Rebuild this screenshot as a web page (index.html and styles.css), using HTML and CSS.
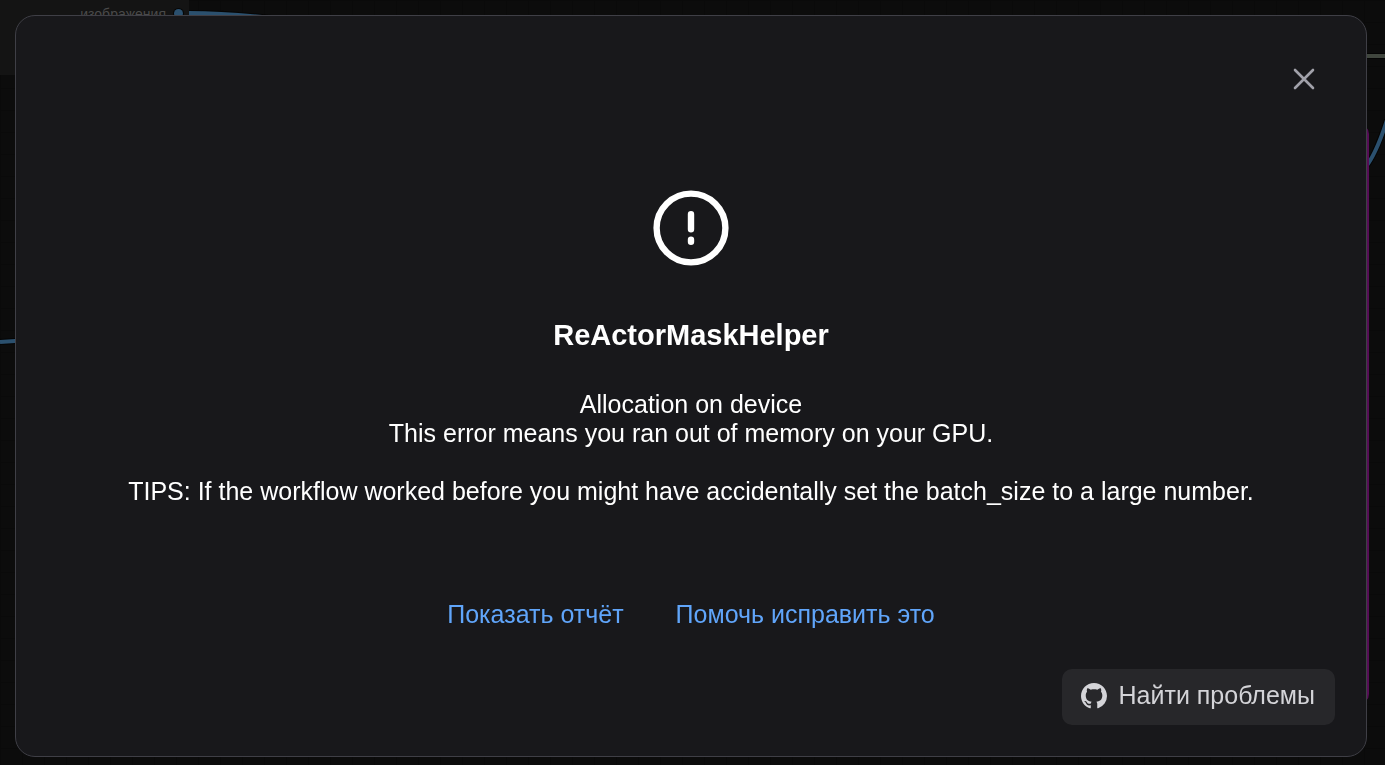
FILE: index.html
```html
<!DOCTYPE html>
<html lang="ru">
<head>
    <meta charset="UTF-8">
    <meta name="viewport" content="width=device-width, initial-scale=1.0">
    <title>ReActorMaskHelper</title>
    <link rel="stylesheet" href="styles.css">
</head>
<body>
    <div class="canvas">
        <svg class="wires wires-left" width="300" height="400" viewBox="0 0 300 400">
            <path class="wire-shadow" d="M189 13C215 13 235 14 270 18M0 342L30 340"/>
            <path class="wire" d="M189 13C215 13 235 14 270 18M0 342L30 340"/>
        </svg>
        <svg class="wires wires-right" width="40" height="200" viewBox="0 0 40 200">
            <path class="wire-shadow" d="M0 56H40M18 170C27 161 34 145 42 120"/>
            <path class="wire" d="M18 170C27 161 34 145 42 120"/>
            <path class="wire wire-mask" d="M0 56H40"/>
        </svg>
        <div class="group"></div>
        <div class="node">
            <span class="slot-name">изображения</span>
            <span class="slot-dot"></span>
        </div>
    </div>

    <div class="overlay">
        <div class="dialog" role="dialog" aria-modal="true" aria-labelledby="dialog-title">
            <div class="dialog-header">
                <button class="close-btn" type="button" aria-label="Закрыть">
                    <svg width="22" height="22" viewBox="0 0 22 22">
                        <path d="M2 2L20 20M20 2L2 20"/>
                    </svg>
                </button>
            </div>
            <div class="dialog-content">
                <svg class="error-icon" width="76" height="76" viewBox="0 0 76 76">
                    <circle cx="38" cy="38" r="34.4"/>
                    <path d="M38 24.3V39.3M38 49.7V51.7"/>
                </svg>
                <h3 class="title" id="dialog-title">ReActorMaskHelper</h3>
                <p class="message">Allocation on device
This error means you ran out of memory on your GPU.

TIPS: If the workflow worked before you might have accidentally set the batch_size to a large number.</p>
                <div class="links">
                    <button class="link-btn" type="button">Показать отчёт</button>
                    <button class="link-btn" type="button">Помочь исправить это</button>
                </div>
            </div>
            <div class="dialog-footer">
                <button class="issues-btn" type="button">
                    <svg width="26" height="26" viewBox="0 0 16 16">
                        <path d="M8 0C3.58 0 0 3.58 0 8c0 3.54 2.29 6.53 5.47 7.59.4.07.55-.17.55-.38 0-.19-.01-.82-.01-1.49-2.01.37-2.53-.49-2.69-.94-.09-.23-.48-.94-.82-1.13-.28-.15-.68-.52-.01-.53.63-.01 1.08.58 1.23.82.72 1.21 1.87.87 2.33.66.07-.52.28-.87.51-1.07-1.78-.2-3.64-.89-3.64-3.95 0-.87.31-1.59.82-2.15-.08-.2-.36-1.02.08-2.12 0 0 .67-.21 2.2.82.64-.18 1.32-.27 2-.27s1.36.09 2 .27c1.53-1.04 2.2-.82 2.2-.82.44 1.1.16 1.92.08 2.12.51.56.82 1.27.82 2.15 0 3.07-1.87 3.75-3.65 3.95.29.25.54.73.54 1.48 0 1.07-.01 1.93-.01 2.2 0 .21.15.46.55.38A8.01 8.01 0 0 0 16 8c0-4.42-3.58-8-8-8z"/>
                    </svg>
                    <span>Найти проблемы</span>
                </button>
            </div>
        </div>
    </div>
</body>
</html>
```

FILE: styles.css
```css
* {
    box-sizing: border-box;
}
body {
    margin: 0;
    background-color: #0c0c0c;
    color: white;
    font-family: "Liberation Sans", Arial, sans-serif;
    font-size: 25px;
    line-height: 29px;
}
button {
    border: none;
    padding: 0;
    background: none;
    font: inherit;
    cursor: pointer;
}

/* node graph behind the dialog */
.canvas {
    position: fixed;
    inset: 0;
    overflow: hidden;
    background-image:
        linear-gradient(#0a0a0a 1px, transparent 1px),
        linear-gradient(90deg, #0a0a0a 1px, transparent 1px);
    background-size: 22px 22px;
}
.node {
    position: absolute;
    top: 0;
    left: 0;
    display: flex;
    justify-content: flex-end;
    gap: 8px;
    width: 189px;
    height: 75px;
    padding: 6px 6px 0 0;
    background-color: #141414;
    color: #4a4a4a;
    font-size: 14px;
    line-height: 16px;
}
.slot-dot {
    width: 9px;
    height: 9px;
    margin-top: 3px;
    border-radius: 50%;
    background-color: #2b506e;
    box-shadow: 0 0 0 1px #060606;
}
.group {
    position: absolute;
    top: 124px;
    right: 16px;
    width: 300px;
    height: 580px;
    border: 2px solid #560d56;
    border-radius: 10px;
    background-color: #3a083a;
}
.wires {
    position: absolute;
    top: 0;
    fill: none;
}
.wires-left {
    left: 0;
}
.wires-right {
    right: 0;
}
.wire {
    stroke: #2b506e;
    stroke-width: 4;
}
.wire-mask {
    stroke: #40463e;
}
.wire-shadow {
    stroke: #050505;
    stroke-width: 6;
}

.overlay {
    position: relative;
    display: flex;
    min-height: 100vh;
    padding: 15px 18px 8px 15px;
}
.dialog {
    display: flex;
    flex-direction: column;
    flex: 1;
    background-color: #18181b;
    border: 1px solid #3f3f46;
    border-radius: 20px;
}
.dialog-header {
    display: flex;
    justify-content: flex-end;
    padding: 36px 36px 0;
}
.close-btn {
    display: flex;
    align-items: center;
    justify-content: center;
    width: 53px;
    height: 53px;
    border-radius: 50%;
}
.close-btn svg {
    fill: none;
    stroke: #a1a1aa;
    stroke-width: 2.6;
    stroke-linecap: round;
}
.dialog-content {
    display: flex;
    flex-direction: column;
    align-items: center;
    flex: 1;
    padding: 85px 32px 0;
    text-align: center;
}
.error-icon {
    fill: none;
    stroke: white;
    stroke-width: 6.4;
    stroke-linecap: round;
}
.title {
    margin: 52px 0 0;
    font-size: 29px;
    line-height: 34px;
}
.message {
    margin: 38px 0 0;
    white-space: pre-wrap;
}
.links {
    display: flex;
    justify-content: center;
    gap: 52px;
    margin-top: 94px;
}
.link-btn {
    color: #60a5fa;
}
.dialog-footer {
    display: flex;
    justify-content: flex-end;
    padding: 31px;
}
.issues-btn {
    display: flex;
    align-items: center;
    gap: 12px;
    height: 56px;
    padding: 0 20px 3px 19px;
    border-radius: 10px;
    background-color: #27272a;
    color: #d4d4d8;
}
.issues-btn svg {
    fill: #d4d4d8;
}
```
